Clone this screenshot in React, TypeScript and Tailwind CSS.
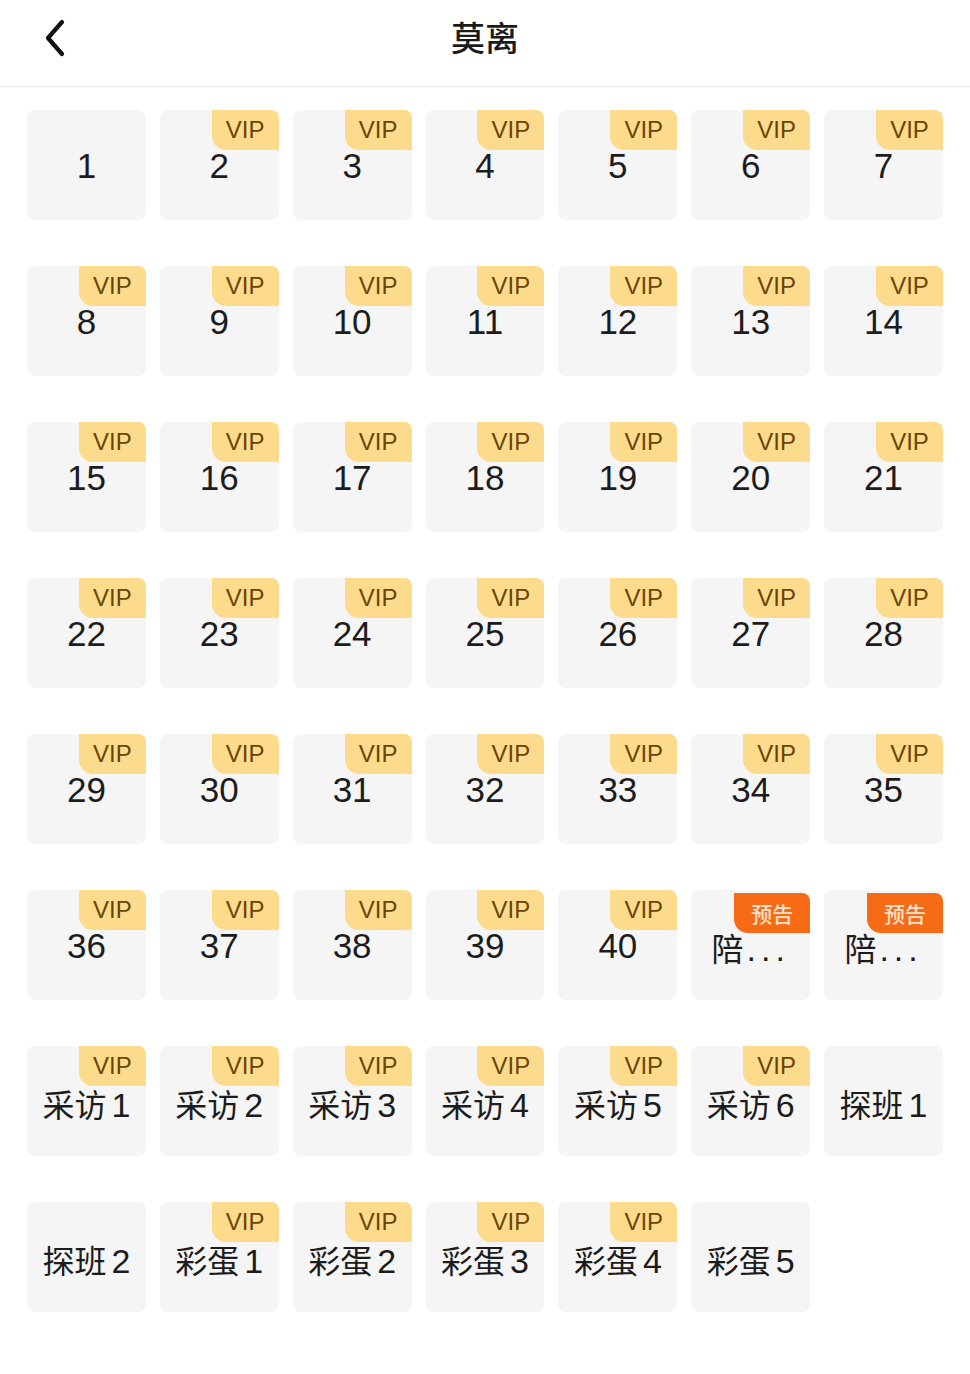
import React from 'react';

type Badge = 'vip' | 'preview' | null;

interface Episode {
    label: string;
    badge: Badge;
}

const EPISODES: Episode[] = [
    { label: '1', badge: null },
    ...Array.from({ length: 39 }, (_, i) => ({ label: String(i + 2), badge: 'vip' as Badge })),
    { label: '陪...', badge: 'preview' },
    { label: '陪...', badge: 'preview' },
    ...[1, 2, 3, 4, 5, 6].map((n) => ({ label: `采访${n}`, badge: 'vip' as Badge })),
    { label: '探班1', badge: null },
    { label: '探班2', badge: null },
    ...[1, 2, 3, 4].map((n) => ({ label: `彩蛋${n}`, badge: 'vip' as Badge })),
    { label: '彩蛋5', badge: null },
];

const LATIN = '"Liberation Sans", "Noto Sans CJK SC", sans-serif';
const CJK = '"Noto Sans CJK SC", "Noto Sans", sans-serif';

const Label: React.FC<{ text: string }> = ({ text }) => {
    // split "采访1" into the chinese part and the trailing number / dots
    const m = text.match(/^([^\d.]*)([\d.]*)$/);
    const head = m ? m[1] : text;
    const tail = m ? m[2] : '';
    if (!head) {
        return (
            <span className="text-[35px] leading-none text-[#1c1c1c]" style={{ fontFamily: LATIN }}>
                {tail}
            </span>
        );
    }
    return (
        <span className="flex items-baseline whitespace-nowrap text-[#1c1c1c] mt-[6px]">
            <span className="text-[32px] leading-none" style={{ fontFamily: CJK }}>{head}</span>
            {tail && (
                <span
                    className={`text-[34px] leading-none ${tail.startsWith('.') ? 'ml-[3px] tracking-[5px]' : 'ml-[5px]'}`}
                    style={{ fontFamily: LATIN }}
                >
                    {tail}
                </span>
            )}
        </span>
    );
};

const EpisodeCell: React.FC<{ ep: Episode }> = ({ ep }) => {
    return (
        <div className="relative h-[110px] rounded-[8px] bg-[#f5f5f5] flex items-center justify-center">
            {ep.badge === 'vip' && (
                <div
                    className="absolute top-0 right-0 w-[67px] h-[40px] bg-[#fcdc8c] rounded-tr-[8px] rounded-bl-[14px] flex items-center justify-center text-[24px] leading-none text-[#6a4508]"
                    style={{ fontFamily: LATIN }}
                >
                    VIP
                </div>
            )}
            {ep.badge === 'preview' && (
                <div className="absolute top-[3px] right-0 w-[76px] h-[40px] bg-[#f86b16] rounded-tr-[8px] rounded-bl-[14px] flex items-center justify-center text-[21px] font-medium leading-none text-[#fde3cd]">
                    预告
                </div>
            )}
            <Label text={ep.label} />
        </div>
    );
};

export default function App() {
    return (
        <div className="w-[970px] min-h-[1374px] bg-white" style={{ fontFamily: CJK }}>
            {/* Header */}
            <div className="relative h-[87px] border-b border-[#ececec] flex items-center justify-center">
                <button className="absolute left-[38px] top-[18px] w-[34px] h-[40px] flex items-center justify-center">
                    <svg width="26" height="38" viewBox="0 0 26 38" fill="none">
                        <path d="M20 3 L6 19 L20 35" stroke="#111" strokeWidth="4.2" strokeLinecap="round" strokeLinejoin="round" />
                    </svg>
                </button>
                <h1 className="text-[34px] font-medium text-[#1a1a1a] leading-none -mt-[12px]">莫离</h1>
            </div>

            {/* Episode grid */}
            <div className="grid grid-cols-7 gap-x-[14px] gap-y-[46px] px-[27px] pt-[23px] pb-[60px]">
                {EPISODES.map((ep, i) => (
                    <EpisodeCell key={i} ep={ep} />
                ))}
            </div>
        </div>
    );
}
